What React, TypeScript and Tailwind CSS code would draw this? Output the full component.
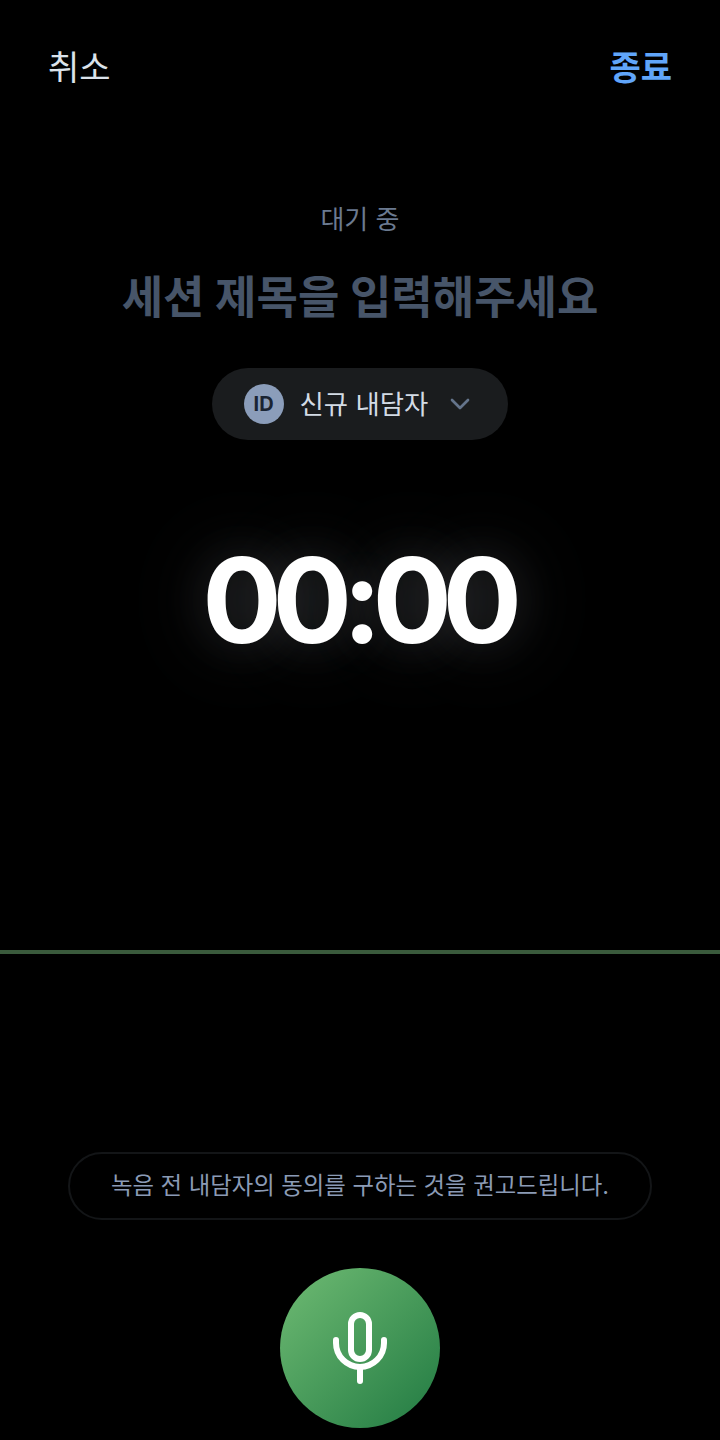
import { ChevronDown } from "lucide-react";

const FONT = "font-['Inter','Noto_Sans_CJK_KR',sans-serif]";

/** Microphone glyph of the record button. */
function MicGlyph() {
  return (
    <svg width="54" height="72" viewBox="0 0 54 72" fill="none" stroke="#fff" strokeWidth="6" strokeLinecap="round" strokeLinejoin="round">
      <rect x="18" y="3" width="18" height="44" rx="9" />
      <path d="M3 28v3a24 24 0 0 0 48 0v-3" />
      <path d="M27 55v14" />
    </svg>
  );
}

export default function App() {
  return (
    <div className={`${FONT} flex h-[1440px] w-[720px] flex-col items-center overflow-hidden bg-black`}>
      <header className="flex h-[136px] w-full items-center justify-between px-12 text-[34px] leading-none">
        <button type="button" className="text-[#dbe2ea]">취소</button>
        <button type="button" className="font-semibold text-[#60a5fa]">종료</button>
      </header>

      <p className="mt-[64px] text-[26px] leading-[40px] text-[#6b7a90]">대기 중</p>
      <h1 className="mt-[28px] text-[45px] font-bold leading-[60px] text-[#475569]">세션 제목을 입력해주세요</h1>

      <button type="button" className="mt-[40px] flex h-[72px] w-[296px] items-center justify-center rounded-full bg-[#1a1c1e]">
        <span className="flex h-10 w-10 items-center justify-center rounded-full bg-[#8b9dba] text-[20px] font-bold text-[#1a2433]">ID</span>
        <span className="ml-4 text-[26.4px] leading-none text-[#d3dbe5]">신규 내담자</span>
        <ChevronDown size={32} strokeWidth={2} className="ml-4 text-[#64748b]" />
      </button>

      <div className="mt-[88px] pr-[5px] text-[118px] font-bold leading-[144px] tracking-[-0.08em] text-white [text-shadow:0_0_48px_rgba(226,232,240,0.16),0_0_90px_rgba(226,232,240,0.16)]">
        00:00
      </div>

      <div className="mt-[278px] h-1 w-full bg-[#3a5a3c]" />

      <p className="mt-[198px] flex h-[68px] w-[584px] items-center justify-center rounded-full border-2 border-[#131517] text-[23.4px] text-[#8b9bb5]">
        녹음 전 내담자의 동의를 구하는 것을 권고드립니다.
      </p>

      <button type="button" className="mt-12 flex h-40 w-40 items-center justify-center rounded-full bg-[linear-gradient(135deg,#6fbb73,#217a42)]">
        <MicGlyph />
      </button>
    </div>
  );
}
